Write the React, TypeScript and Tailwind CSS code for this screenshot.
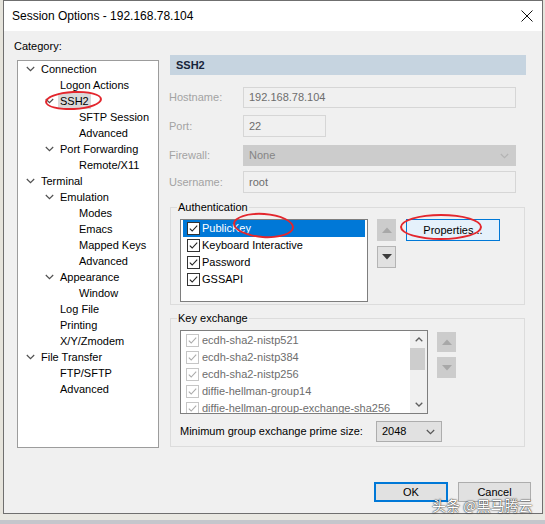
import React from "react";

const tree = [
  { t: "Connection", l: 0, c: true },
  { t: "Logon Actions", l: 1 },
  { t: "SSH2", l: 1, c: true, sel: true },
  { t: "SFTP Session", l: 2 },
  { t: "Advanced", l: 2 },
  { t: "Port Forwarding", l: 1, c: true },
  { t: "Remote/X11", l: 2 },
  { t: "Terminal", l: 0, c: true },
  { t: "Emulation", l: 1, c: true },
  { t: "Modes", l: 2 },
  { t: "Emacs", l: 2 },
  { t: "Mapped Keys", l: 2 },
  { t: "Advanced", l: 2 },
  { t: "Appearance", l: 1, c: true },
  { t: "Window", l: 2 },
  { t: "Log File", l: 1 },
  { t: "Printing", l: 1 },
  { t: "X/Y/Zmodem", l: 1 },
  { t: "File Transfer", l: 0, c: true },
  { t: "FTP/SFTP", l: 1 },
  { t: "Advanced", l: 1 },
];

const indent = ["pl-[8px]", "pl-[27px]", "pl-[46px]"];

const authItems = ["PublicKey", "Keyboard Interactive", "Password", "GSSAPI"];
const kexItems = [
  "ecdh-sha2-nistp521",
  "ecdh-sha2-nistp384",
  "ecdh-sha2-nistp256",
  "diffie-hellman-group14",
  "diffie-hellman-group-exchange-sha256",
];

function Chevron({ color = "#505050" }: { color?: string }) {
  return (
    <svg width="9" height="6" viewBox="0 0 9 6">
      <polyline points="0.8,1 4.5,4.6 8.2,1" fill="none" stroke={color} strokeWidth="1.2" />
    </svg>
  );
}

function Check({ muted = false }: { muted?: boolean }) {
  return (
    <svg width="13" height="13" viewBox="0 0 13 13" className="shrink-0">
      <rect
        x="0.5"
        y="0.5"
        width="12"
        height="12"
        fill={muted ? "none" : "#fff"}
        stroke={muted ? "#c6c6c6" : "#333"}
      />
      <polyline
        points="2.8,6.6 5.2,9 10.2,3.6"
        fill="none"
        stroke={muted ? "#ababab" : "#222"}
        strokeWidth="1.1"
      />
    </svg>
  );
}

function Arrow({ up, dark }: { up?: boolean; dark?: boolean }) {
  return (
    <div
      className={
        dark
          ? "flex h-[22px] w-[19px] items-center justify-center border border-[#b4b4b4] bg-[#e1e1e1]"
          : "flex h-[22px] w-[19px] items-center justify-center bg-[#cccccc]"
      }
    >
      <svg width="10" height="6" viewBox="0 0 10 6">
        <polygon
          points={up ? "0,6 5,0.5 10,6" : "0,0 10,0 5,5.5"}
          fill={dark ? "#3c3c3c" : "#a8a8a8"}
        />
      </svg>
    </div>
  );
}

function Field({
  label,
  value,
  w,
  h,
  mt,
  select,
}: {
  label: string;
  value: string;
  w: string;
  h: string;
  mt: string;
  select?: boolean;
}) {
  return (
    <div className={`flex items-center ${mt}`}>
      <span className="w-[74px] text-[11px] text-[#a3a3a3]">{label}</span>
      <div
        className={
          select
            ? `flex items-center justify-between border border-[#cccccc] bg-[#cccccc] pl-[5px] pr-[6px] text-[11px] text-[#858585] ${w} ${h}`
            : `flex items-center border border-[#d6d6d6] bg-[#f0f0f0] pl-[5px] text-[11px] text-[#6d6d6d] ${w} ${h}`
        }
      >
        <span>{value}</span>
        {select && <Chevron color="#b4b4b4" />}
      </div>
    </div>
  );
}

export default function App() {
  return (
    <div className="relative flex h-[524px] w-[545px] flex-col overflow-hidden bg-[#e6e4dc] font-['Liberation_Sans',Arial,sans-serif] text-black">
      {/* dialog */}
      <div className="ml-[3px] flex h-[514px] w-[540px] flex-col border border-[#6f6f6f] bg-[#f0f0f0]">
        {/* title bar */}
        <div className="flex h-[30px] items-center justify-between bg-white pl-[8px] pr-[9px]">
          <span className="text-[12px]">Session Options - 192.168.78.104</span>
          <svg width="12" height="12" viewBox="0 0 12 12">
            <path d="M0.5 0.5 L11.5 11.5 M11.5 0.5 L0.5 11.5" stroke="#111" strokeWidth="1" />
          </svg>
        </div>

        <div className="flex">
          {/* left column */}
          <div className="flex flex-col pl-[10px] pt-[8px]">
            <span className="h-[14px] text-[11px] leading-[14px]">Category:</span>
            <div className="ml-[3px] mt-[7px] h-[388px] w-[142px] border border-[#9c9c9c] bg-white">
              {tree.map((n, i) => (
                <div key={i} className={`flex h-[16px] items-center text-[11px] ${indent[n.l]}`}>
                  <span className="flex w-[15px] items-center">{n.c && <Chevron />}</span>
                  <span className={n.sel ? "-ml-[2px] bg-[#d9d9d9] px-[2px] leading-[16px]" : "leading-[16px]"}>
                    {n.t}
                  </span>
                </div>
              ))}
            </div>
          </div>

          {/* right column */}
          <div className="ml-[10px] flex w-[357px] flex-col pt-[24px]">
            <div className="ml-[1px] flex h-[20px] w-[356px] items-center bg-[#c6d4e0] pl-[6px] text-[11px] font-bold text-[#17243a]">
              SSH2
            </div>
            <Field label="Hostname:" value="192.168.78.104" w="w-[273px]" h="h-[21px]" mt="mt-[12px]" />
            <Field label="Port:" value="22" w="w-[83px]" h="h-[22px]" mt="mt-[7px]" />
            <Field label="Firewall:" value="None" w="w-[273px]" h="h-[21px]" mt="mt-[8px]" select />
            <Field label="Username:" value="root" w="w-[273px]" h="h-[22px]" mt="mt-[5px]" />

            {/* Authentication */}
            <fieldset className="ml-[1px] mt-[7px] w-[355px] border border-[#dcdcdc] pb-[2px] pl-[9px]">
              <legend className="-ml-[3px] px-[1px] text-[11px] leading-[14px]">Authentication</legend>
              <div className="mt-[5px] flex">
                <div className="h-[83px] w-[188px] border border-[#7e7e7e] bg-white">
                  {authItems.map((a, i) => (
                    <div
                      key={a}
                      className={
                        i === 0
                          ? "mx-[2px] flex h-[17px] items-center gap-[2px] bg-[#0078d7] pl-[4px] text-[11px] text-white"
                          : "mx-[2px] flex h-[17px] items-center gap-[2px] pl-[4px] text-[11px]"
                      }
                    >
                      <Check />
                      <span>{a}</span>
                    </div>
                  ))}
                </div>
                <div className="ml-[9px] flex flex-col gap-[5px]">
                  <Arrow up />
                  <Arrow dark />
                </div>
                <div className="ml-[10px] flex h-[22px] w-[94px] items-center justify-center border border-[#0078d7] bg-[#e5f1fb] text-[11px]">
                  Properties...
                </div>
              </div>
            </fieldset>

            {/* Key exchange */}
            <fieldset className="ml-[1px] mt-[6px] w-[355px] border border-[#dcdcdc] pb-[4px] pl-[9px]">
              <legend className="-ml-[3px] px-[1px] text-[11px] leading-[14px]">Key exchange</legend>
              <div className="mt-[5px] flex">
                <div className="flex h-[84px] w-[248px] overflow-hidden border border-[#7e7e7e] bg-white">
                  <div className="flex-1 pt-[1px]">
                    {kexItems.map((k) => (
                      <div key={k} className="flex h-[17px] items-center gap-[3px] pl-[5px] text-[11px] text-[#6d6d6d]">
                        <Check muted />
                        <span className="whitespace-nowrap">{k}</span>
                      </div>
                    ))}
                  </div>
                  <div className="flex w-[17px] flex-col bg-[#f0f0f0]">
                    <div className="flex h-[17px] items-center justify-center">
                      <svg width="8" height="5" viewBox="0 0 8 5">
                        <polyline points="0.7,4.3 4,1 7.3,4.3" fill="none" stroke="#606060" strokeWidth="1.3" />
                      </svg>
                    </div>
                    <div className="h-[22px] w-[15px] bg-[#cdcdcd]" />
                    <div className="flex-1" />
                    <div className="flex h-[17px] items-center justify-center">
                      <svg width="8" height="5" viewBox="0 0 8 5">
                        <polyline points="0.7,0.7 4,4 7.3,0.7" fill="none" stroke="#606060" strokeWidth="1.3" />
                      </svg>
                    </div>
                  </div>
                </div>
                <div className="ml-[9px] mt-[2px] flex flex-col gap-[5px]">
                  <div className="flex h-[20px] w-[19px] items-center justify-center bg-[#cccccc]">
                    <svg width="10" height="6" viewBox="0 0 10 6">
                      <polygon points="0,6 5,0.5 10,6" fill="#a8a8a8" />
                    </svg>
                  </div>
                  <div className="flex h-[21px] w-[19px] items-center justify-center bg-[#cccccc]">
                    <svg width="10" height="6" viewBox="0 0 10 6">
                      <polygon points="0,0 10,0 5,5.5" fill="#a8a8a8" />
                    </svg>
                  </div>
                </div>
              </div>
              <div className="mt-[7px] flex items-center">
                <span className="w-[196px] text-[11px]">Minimum group exchange prime size:</span>
                <div className="flex h-[21px] w-[66px] items-center justify-between border border-[#adadad] bg-[#e1e1e1] pl-[5px] pr-[6px] text-[11px]">
                  <span>2048</span>
                  <Chevron color="#555" />
                </div>
              </div>
            </fieldset>
          </div>
        </div>

        {/* buttons */}
        <div className="mt-[34px] flex justify-end gap-[10px] pr-[11px]">
          <div className="flex h-[20px] w-[74px] items-center justify-center border-2 border-[#0078d7] bg-[#e1e1e1] text-[11px]">
            OK
          </div>
          <div className="flex h-[20px] w-[73px] items-center justify-center border border-[#adadad] bg-[#e1e1e1] text-[11px]">
            Cancel
          </div>
        </div>
      </div>
      <div className="h-[6px] bg-[#e9e8e2]" />
      <div className="flex-1 bg-[#c5c6cc]" />

      {/* annotations */}
      <div className="absolute left-[45px] top-[91px] h-[19px] w-[57px] -rotate-[3deg] rounded-[50%] border-2 border-[#e3262d]" />
      <div className="absolute left-[233px] top-[213px] h-[25px] w-[61px] rotate-[4deg] rounded-[50%] border-2 border-[#e3262d]" />
      <div className="absolute left-[400px] top-[214px] h-[26px] w-[82px] rounded-[50%] border-2 border-[#e3262d]" />

      {/* watermark */}
      <div className="absolute left-[432px] top-[496px] whitespace-nowrap font-['Noto_Sans_CJK_SC',sans-serif] text-[14px] leading-[18px] text-white [text-shadow:0_0_2px_#333,0_0_1px_#000]">
        头条 @黑马腾云
      </div>
    </div>
  );
}
